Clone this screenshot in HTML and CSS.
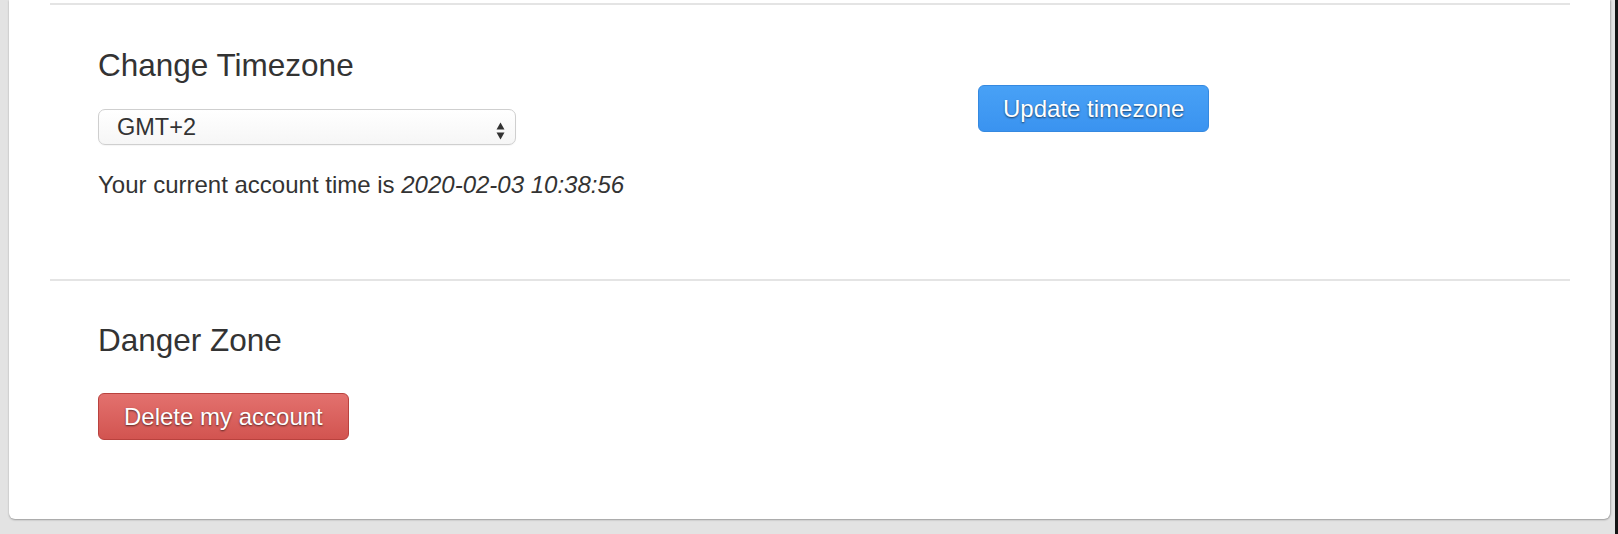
FILE: index.html
```html
<!DOCTYPE html>
<html lang="en">
<head>
<meta charset="utf-8">
<title>Account settings</title>
<link rel="stylesheet" href="styles.css">
</head>
<body>
<div class="screen">
  <div class="card">
    <section class="panel panel-timezone">
      <div class="panel-grid">
        <div class="col-main">
          <h3 class="panel-title">Change Timezone</h3>
          <div class="select-wrap">
            <select class="select">
              <option>GMT+2</option>
            </select>
            <svg class="select-arrows" width="9" height="18" viewBox="0 0 9 18" aria-hidden="true">
              <path d="M4.5 0.5 L8.5 7.5 L0.5 7.5 Z" fill="#333"/>
              <path d="M0.5 10.5 L8.5 10.5 L4.5 17.5 Z" fill="#333"/>
            </svg>
          </div>
          <p class="account-time">Your current account time is <em>2020-02-03 10:38:56</em></p>
        </div>
        <div class="col-side">
          <button class="btn btn-primary" type="button">Update timezone</button>
        </div>
      </div>
    </section>
    <section class="panel panel-danger">
      <h3 class="panel-title">Danger Zone</h3>
      <button class="btn btn-danger" type="button">Delete my account</button>
    </section>
  </div>
  <div class="edge"></div>
</div>
</body>
</html>
```
FILE: styles.css
```css
* { box-sizing: border-box; }

html, body {
  margin: 0;
  padding: 0;
}

body {
  font-family: "Liberation Sans", Arial, Helvetica, sans-serif;
  color: #333;
  background: #e3e3e3;
}

.screen {
  display: flex;
  align-items: flex-start;
  height: 534px;
  background: #e3e3e3;
  overflow: hidden;
}

.card {
  flex: 1;
  margin: 0 5px 15px 9px;
  padding: 3px 40px 0 41px;
  background: #fff;
  border-radius: 0 0 6px 6px;
  box-shadow: 0 1px 2px rgba(0, 0, 0, 0.28), 1px 0 2px rgba(0, 0, 0, 0.18);
}

.edge {
  width: 3px;
  align-self: stretch;
  background: #151515;
}

.panel {
  border-top: 2px solid #e4e4e4;
}

.panel-timezone {
  padding: 42px 0 79px 48px;
}

.panel-danger {
  padding: 41px 0 79px 48px;
}

.panel-grid {
  display: grid;
  grid-template-columns: 880px auto;
}

.col-side {
  padding-top: 38px;
}

.panel-title {
  margin: 0;
  font-size: 31.5px;
  line-height: 36px;
  font-weight: normal;
  color: #333;
}

.select-wrap {
  position: relative;
  width: 418px;
  margin-top: 26px;
}

.select {
  display: block;
  width: 100%;
  height: 36px;
  margin: 0;
  padding: 0 0 0 18px;
  font-family: inherit;
  font-size: 23.5px;
  color: #333;
  border: 1px solid #cfcfcf;
  border-radius: 7px;
  background: linear-gradient(#ffffff, #f6f6f6);
  -webkit-appearance: none;
  appearance: none;
  box-shadow: 0 1px 1px rgba(0, 0, 0, 0.04);
}

.select-arrows {
  position: absolute;
  right: 11px;
  top: 13px;
  pointer-events: none;
}

.account-time {
  margin: 25px 0 0;
  font-size: 24px;
  line-height: 30px;
  color: #333;
}

.account-time em {
  font-style: italic;
}

.btn {
  display: inline-block;
  height: 47px;
  margin: 0;
  font-family: inherit;
  font-size: 24px;
  line-height: 27px;
  color: #fff;
  border-radius: 6px;
  text-shadow: 0 1px 2px rgba(0, 0, 0, 0.6);
  cursor: pointer;
}

.btn-primary {
  padding: 9px 24px;
  background: linear-gradient(#48a1f6, #3a93f0);
  border: 1px solid #3589e0;
}

.btn-danger {
  margin-top: 35px;
  padding: 9px 25px;
  background: linear-gradient(#e3716e, #d25450);
  border: 1px solid #b9423e;
}
```
